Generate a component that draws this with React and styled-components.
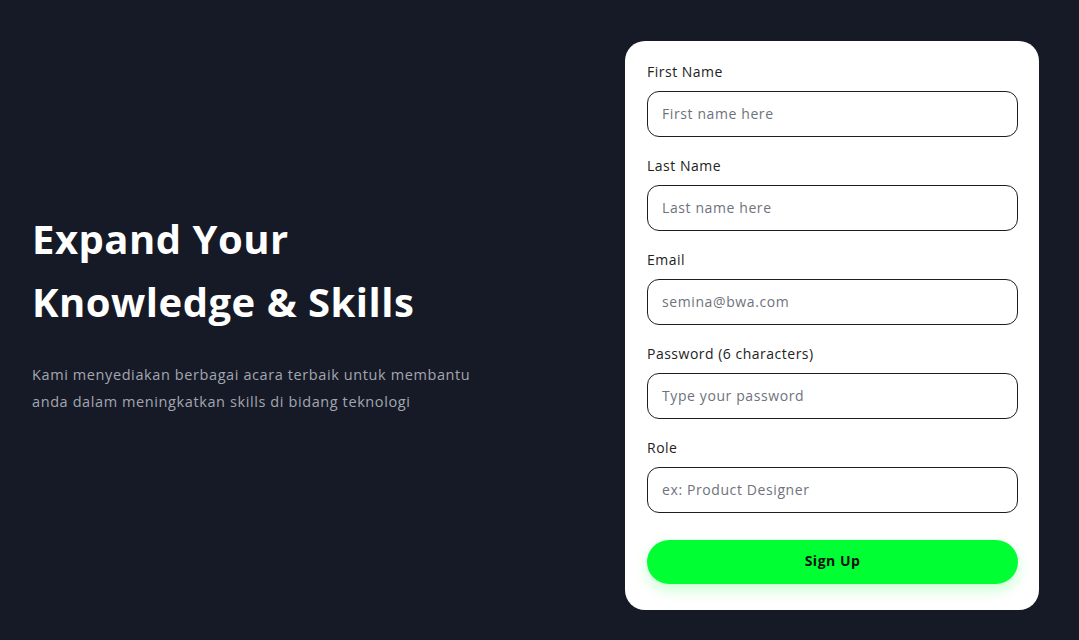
import React from "react";
import styled, { createGlobalStyle } from "styled-components";

const Global = createGlobalStyle`
  * { box-sizing: border-box; }
  html, body { margin: 0; padding: 0; background: #161a26; }
  body { font-family: "Open Sans", "Noto Sans", sans-serif; }
`;

const Page = styled.div`
  width: 1079px;
  height: 640px;
  display: flex;
  align-items: center;
  justify-content: space-between;
  padding: 41px 40px 30px 32px;
  background: #161a26;
`;

const Hero = styled.div`
  display: flex;
  flex-direction: column;
  padding-bottom: 30px;
`;

const Title = styled.h1`
  margin: 0;
  color: #ffffff;
  font-size: 40px;
  font-weight: 700;
  line-height: 63px;
  letter-spacing: 0.5px;
`;

const Lead = styled.p`
  margin: 28px 0 0;
  color: #a3a6b0;
  font-size: 14.5px;
  line-height: 27px;
  letter-spacing: 0.6px;
  width: 460px;
`;

const Card = styled.form`
  width: 414px;
  background: #ffffff;
  border-radius: 20px;
  padding: 21px 21px 26px 22px;
  display: flex;
  flex-direction: column;
`;

const Field = styled.label`
  display: flex;
  flex-direction: column;
  gap: 9px;
  margin-bottom: 19px;
`;

const LabelText = styled.span`
  color: #222222;
  font-size: 14px;
  line-height: 20px;
  letter-spacing: 0.5px;
`;

const Input = styled.input`
  height: 46px;
  width: 100%;
  border: 1px solid #1e1e1e;
  border-radius: 12px;
  padding: 0 14px 2px;
  font-family: inherit;
  font-size: 14px;
  letter-spacing: 0.6px;
  color: #222;
  outline: none;
  &::placeholder { color: #6e727c; }
`;

const Button = styled.button`
  margin-top: 8px;
  height: 44px;
  width: 100%;
  border: none;
  border-radius: 22px;
  padding: 0 0 4px;
  background: #00ff33;
  box-shadow: 0 6px 14px rgba(0, 255, 51, 0.22);
  color: #111;
  font-family: inherit;
  font-weight: 700;
  font-size: 14px;
  letter-spacing: 0.5px;
`;

const fields = [
  ["First Name", "First name here", "text"],
  ["Last Name", "Last name here", "text"],
  ["Email", "semina@bwa.com", "email"],
  ["Password (6 characters)", "Type your password", "password"],
  ["Role", "ex: Product Designer", "text"],
];

export default function App() {
  return (
    <>
      <Global />
      <Page>
        <Hero>
          <Title>
            Expand Your
            <br />
            Knowledge &amp; Skills
          </Title>
          <Lead>
            Kami menyediakan berbagai acara terbaik untuk membantu anda dalam
            meningkatkan skills di bidang teknologi
          </Lead>
        </Hero>
        <Card onSubmit={(e) => e.preventDefault()}>
          {fields.map(([label, ph, type]) => (
            <Field key={label}>
              <LabelText>{label}</LabelText>
              <Input type={type} placeholder={ph} />
            </Field>
          ))}
          <Button type="submit">Sign Up</Button>
        </Card>
      </Page>
    </>
  );
}
